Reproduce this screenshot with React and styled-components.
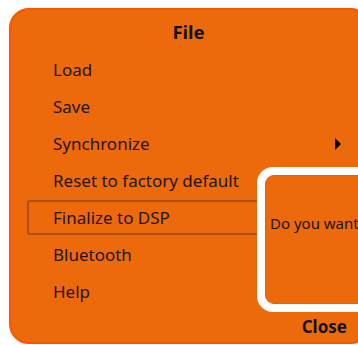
import React from 'react'
import styled, { createGlobalStyle } from 'styled-components'

const GlobalStyle = createGlobalStyle`
  html, body {
    margin: 0;
    padding: 0;
    background: #ffffff;
    overflow: hidden;
  }
  body {
    font-family: "Noto Sans", "Open Sans", sans-serif;
  }
`

const Panel = styled.div`
  position: relative;
  box-sizing: border-box;
  margin: 8px 0 0 9px;
  width: 362px;
  height: 336px;
  padding: 10px 0 0 16px;
  background: #ec6a0c;
  border: 2px solid #ff5400;
  border-radius: 20px;
  display: flex;
  flex-direction: column;
`

const Title = styled.h1`
  margin: 0 0 8px 0;
  width: 323px;
  text-align: center;
  font-size: 18.5px;
  line-height: 24px;
  font-weight: 700;
  color: #111;
`

const Menu = styled.ul`
  list-style: none;
  margin: 0;
  padding: 0;
  display: flex;
  flex-direction: column;
  gap: 2px;
`

const Item = styled.li`
  box-sizing: border-box;
  height: 35px;
  width: 322px;
  padding: 0 6px 0 24px;
  display: flex;
  align-items: center;
  justify-content: space-between;
  font-size: 17px;
  color: #24140a;
  border: 2px solid ${p => (p.$selected ? '#b04e0b' : 'transparent')};
  border-radius: 3px;
`

const Arrow = styled.span`
  width: 0;
  height: 0;
  border-top: 6px solid transparent;
  border-bottom: 6px solid transparent;
  border-left: 6px solid #000;
`

const Footer = styled.div`
  display: flex;
  justify-content: flex-end;
  width: 320px;
  margin-top: 8px;
`

const CloseButton = styled.span`
  font-size: 17px;
  font-weight: 700;
  line-height: 20px;
  color: #111;
`

const Dialog = styled.div`
  position: absolute;
  left: 246px;
  top: 157px;
  box-sizing: border-box;
  width: 160px;
  height: 145px;
  border: 8px solid #fff;
  border-radius: 16px;
  background: #fff;
`

const DialogBody = styled.div`
  box-sizing: border-box;
  height: 100%;
  background: #ec6a0c;
  border: 1px solid #ff5400;
  border-radius: 9px;
  padding: 37px 0 0 4px;
  font-size: 15px;
  line-height: 20px;
  color: #1d1208;
  white-space: nowrap;
`

const items = [
  'Load',
  'Save',
  'Synchronize',
  'Reset to factory default',
  'Finalize to DSP',
  'Bluetooth',
  'Help',
]

export default function App() {
  return (
    <>
      <GlobalStyle />
      <Panel>
        <Title>File</Title>
        <Menu>
          {items.map(label => (
            <Item key={label} $selected={label === 'Finalize to DSP'}>
              {label}
              {label === 'Synchronize' && <Arrow />}
            </Item>
          ))}
        </Menu>
        <Footer>
          <CloseButton>Close</CloseButton>
        </Footer>
        <Dialog>
          <DialogBody>Do you want</DialogBody>
        </Dialog>
      </Panel>
    </>
  )
}
